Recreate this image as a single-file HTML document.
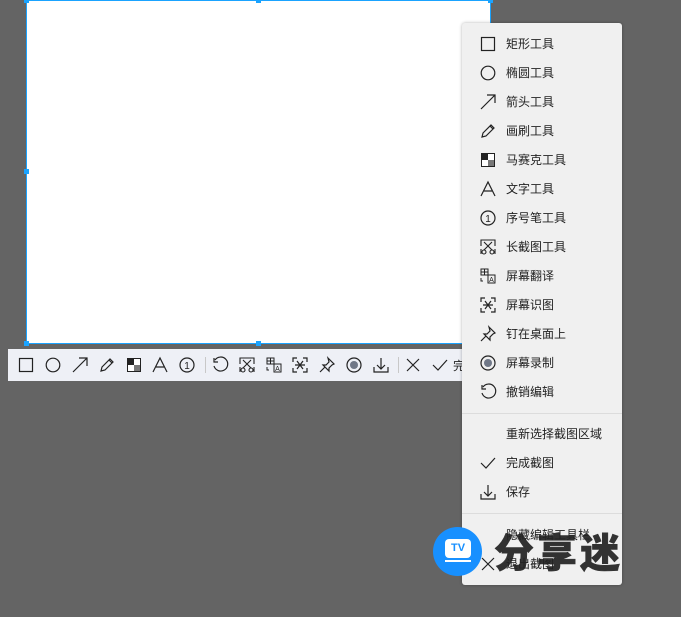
<!DOCTYPE html>
<html><head><meta charset="utf-8"><style>
*{margin:0;padding:0;box-sizing:border-box}
body{width:681px;height:617px;background:#646464;position:relative;overflow:hidden;font-family:"Liberation Sans","Noto Sans CJK SC",sans-serif}
.sel{position:absolute;left:26px;top:0;width:465px;height:344px;background:#fff;border:1px solid #1aa3ff}
.h{position:absolute;width:5px;height:5px;background:#1aa3ff}
.tb{position:absolute;left:8px;top:349px;width:484px;height:32px;background:#eef0f6}
.tb svg{position:absolute;top:7px}
.sep{position:absolute;top:8px;width:1px;height:16px;background:#c8c8c8}
.menu{position:absolute;left:462px;top:23px;width:160px;height:562px;background:#f0f0f0;border-radius:3px;box-shadow:0 0 3px rgba(0,0,0,.3)}
.it{position:absolute;left:44px;font-size:12px;color:#222;line-height:14px}
.menu svg{position:absolute;left:17px}
.ms{position:absolute;left:0;width:160px;height:1px;background:#dcdcdc}
</style></head><body>
<div class="sel"></div>
<div class="h" style="left:24px;top:-2px"></div>
<div class="h" style="left:256px;top:-2px"></div>
<div class="h" style="left:488px;top:-2px"></div>
<div class="h" style="left:24px;top:169px"></div>
<div class="h" style="left:24px;top:341px"></div>
<div class="h" style="left:256px;top:341px"></div>
<svg width="0" height="0" style="position:absolute"><defs>
<g id="i0" fill="none" stroke="#222" stroke-width="1.2"><rect x="2.5" y="2.5" width="13" height="13"/></g>
<g id="i1" fill="none" stroke="#222" stroke-width="1.2"><circle cx="9" cy="9" r="6.8"/></g>
<g id="i2" fill="none" stroke="#222" stroke-width="1.2"><path d="M2 16L16 2M8 2h8v8"/></g>
<g id="i3" fill="none" stroke="#222" stroke-width="1.2"><path d="M3 15l1-4 8-8 3 3-8 8z M11 4l3 3"/></g>
<g id="i4"><rect x="2.5" y="2.5" width="13" height="13" fill="#fff" stroke="#222"/><rect x="3" y="3" width="6" height="6" fill="#222"/><rect x="9" y="9" width="6" height="6" fill="#777"/></g>
<g id="i5" fill="none" stroke="#222" stroke-width="1.2"><path d="M2 16L9 2l7 14M5 11h8"/></g>
<g id="i6"><circle cx="9" cy="9" r="7" fill="none" stroke="#222" stroke-width="1.2"/><text x="9" y="13" font-size="10" text-anchor="middle" fill="#222" font-family="Liberation Sans">1</text></g>
<g id="i7" fill="none" stroke="#222" stroke-width="1.2"><path d="M4 4a7 7 0 1 1-1 6M3 2v4h4"/></g>
<g id="i8" fill="none" stroke="#222" stroke-width="1.1"><path d="M2 8V2h14v6M2 11v5M16 11v5M5 4l8 8M13 4l-8 8"/><circle cx="5" cy="14" r="2"/><circle cx="13" cy="14" r="2"/></g>
<g id="i9" fill="none" stroke="#222" stroke-width="1"><rect x="2" y="2" width="7" height="6"/><path d="M5.5 2v6M2 5h7M2 11v3h2M9 8h7v8H9z"/><text x="12.5" y="15" font-size="7" text-anchor="middle" fill="#222" stroke="none">A</text></g>
<g id="i10" fill="none" stroke="#222" stroke-width="1.2"><path d="M2 6V2h4M12 2h4v4M16 12v4h-4M6 16H2v-4M6 5l6 8M12 5l-6 8M4 9h10"/></g>
<g id="i11" fill="none" stroke="#222" stroke-width="1.2"><path d="M10 2l6 6-2 1-3 3 0 3-6-6 3 0 3-3z M7 11l-5 5"/></g>
<g id="i12"><circle cx="9" cy="9" r="7" fill="none" stroke="#222" stroke-width="1.2"/><circle cx="9" cy="9" r="4" fill="#707888"/></g>
<g id="i13" fill="none" stroke="#222" stroke-width="1.2"><path d="M9 2v11M5 9l4 4 4-4M2 11v5h14v-5"/></g>
<g id="i14" fill="none" stroke="#222" stroke-width="1.2"><path d="M3 3l12 12M15 3L3 15"/></g>
<g id="i15" fill="none" stroke="#222" stroke-width="1.2"><path d="M2 9l5 5 9-10"/></g>
</defs></svg>
<div class="tb">
<svg width="18" height="18" style="left:9px"><use href="#i0"/></svg>
<svg width="18" height="18" style="left:36px"><use href="#i1"/></svg>
<svg width="18" height="18" style="left:63px"><use href="#i2"/></svg>
<svg width="18" height="18" style="left:90px"><use href="#i3"/></svg>
<svg width="18" height="18" style="left:117px"><use href="#i4"/></svg>
<svg width="18" height="18" style="left:143px"><use href="#i5"/></svg>
<svg width="18" height="18" style="left:170px"><use href="#i6"/></svg>
<div class="sep" style="left:197px"></div>
<svg width="18" height="18" style="left:203px"><use href="#i7"/></svg>
<svg width="18" height="18" style="left:230px"><use href="#i8"/></svg>
<svg width="18" height="18" style="left:257px"><use href="#i9"/></svg>
<svg width="18" height="18" style="left:283px"><use href="#i10"/></svg>
<svg width="18" height="18" style="left:310px"><use href="#i11"/></svg>
<svg width="18" height="18" style="left:337px"><use href="#i12"/></svg>
<svg width="18" height="18" style="left:364px"><use href="#i13"/></svg>
<div class="sep" style="left:390px"></div>
<svg width="18" height="18" style="left:396px"><use href="#i14"/></svg>
<svg width="18" height="18" style="left:423px"><use href="#i15"/></svg>
<span style="position:absolute;left:445px;top:8px;font-size:12px;color:#222">完成</span>
</div>
<div class="menu">
<svg width="18" height="18" style="top:12px"><use href="#i0"/></svg><div class="it" style="top:14px">矩形工具</div>
<svg width="18" height="18" style="top:41px"><use href="#i1"/></svg><div class="it" style="top:43px">椭圆工具</div>
<svg width="18" height="18" style="top:70px"><use href="#i2"/></svg><div class="it" style="top:72px">箭头工具</div>
<svg width="18" height="18" style="top:99px"><use href="#i3"/></svg><div class="it" style="top:101px">画刷工具</div>
<svg width="18" height="18" style="top:128px"><use href="#i4"/></svg><div class="it" style="top:130px">马赛克工具</div>
<svg width="18" height="18" style="top:157px"><use href="#i5"/></svg><div class="it" style="top:159px">文字工具</div>
<svg width="18" height="18" style="top:186px"><use href="#i6"/></svg><div class="it" style="top:188px">序号笔工具</div>
<svg width="18" height="18" style="top:215px"><use href="#i8"/></svg><div class="it" style="top:217px">长截图工具</div>
<svg width="18" height="18" style="top:244px"><use href="#i9"/></svg><div class="it" style="top:246px">屏幕翻译</div>
<svg width="18" height="18" style="top:273px"><use href="#i10"/></svg><div class="it" style="top:275px">屏幕识图</div>
<svg width="18" height="18" style="top:302px"><use href="#i11"/></svg><div class="it" style="top:304px">钉在桌面上</div>
<svg width="18" height="18" style="top:331px"><use href="#i12"/></svg><div class="it" style="top:333px">屏幕录制</div>
<svg width="18" height="18" style="top:360px"><use href="#i7"/></svg><div class="it" style="top:362px">撤销编辑</div>
<div class="ms" style="top:390px"></div>
<div class="it" style="top:404px">重新选择截图区域</div>
<svg width="18" height="18" style="top:431px"><use href="#i15"/></svg><div class="it" style="top:433px">完成截图</div>
<svg width="18" height="18" style="top:460px"><use href="#i13"/></svg><div class="it" style="top:462px">保存</div>
<div class="ms" style="top:490px"></div>
<div class="it" style="top:505px">隐藏编辑工具栏</div>
<svg width="18" height="18" style="top:532px"><use href="#i14"/></svg><div class="it" style="top:534px">退出截图</div>
</div>
<div style="position:absolute;left:433px;top:527px;width:49px;height:49px;border-radius:50%;background:#1890ff"></div>
<div style="position:absolute;left:445px;top:539px;width:26px;height:19px;border-radius:4px;background:#fff;color:#1890ff;font:bold 11px 'Liberation Sans',sans-serif;text-align:center;line-height:19px">TV</div>
<div style="position:absolute;left:445px;top:560px;width:26px;height:2px;background:#fff"></div>
<div style="position:absolute;left:494px;top:527px;font:900 40px 'Noto Sans CJK SC',sans-serif;color:#222;line-height:46px;letter-spacing:3px;-webkit-text-stroke:0.5px #222;opacity:.92">分享迷</div>
</body></html>
